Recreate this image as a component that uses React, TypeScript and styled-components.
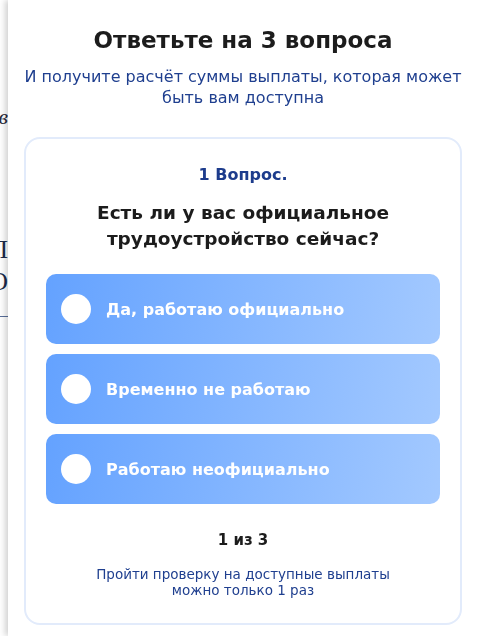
import React from "react";
import styled, { createGlobalStyle } from "styled-components";

const options = ["Да, работаю официально", "Временно не работаю", "Работаю неофициально"];

export default function App() {
    return (
        <>
            <GlobalStyle />
            <Page>
                <PageWord $italic>ов</PageWord>
                <PageHeading>ПП</PageHeading>
                <PageHeading>ОО</PageHeading>
                <PageRule />
            </Page>
            <Drawer>
                <Title>Ответьте на 3 вопроса</Title>
                <Subtitle>
                    И получите расчёт суммы выплаты, которая может
                    <br />
                    быть вам доступна
                </Subtitle>
                <Card>
                    <Step>1 Вопрос.</Step>
                    <Question>
                        Есть ли у вас официальное
                        <br />
                        трудоустройство сейчас?
                    </Question>
                    <Options>
                        {options.map((o) => (
                            <Option key={o}>
                                <Radio />
                                {o}
                            </Option>
                        ))}
                    </Options>
                    <Progress>1 из 3</Progress>
                    <Note>
                        Пройти проверку на доступные выплаты
                        <br />
                        можно только 1 раз
                    </Note>
                </Card>
            </Drawer>
        </>
    );
}

const GlobalStyle = createGlobalStyle`
    html, body {
        margin: 0;
        background: #fff;
        overflow: hidden;
    }
    * {
        box-sizing: border-box;
    }
`;

const Page = styled.div`
    display: flex;
    flex-direction: column;
    align-items: flex-end;
    width: 8px;
    overflow: hidden;
    padding-top: 104px;
    font-family: "Liberation Serif", serif;
`;

const PageWord = styled.div<{ $italic?: boolean }>`
    font-size: 22px;
    font-style: ${(p) => (p.$italic ? "italic" : "normal")};
    color: #2a2a3a;
    height: 130px;
`;

const PageHeading = styled.div`
    font-size: 26px;
    color: #1b2a4a;
    line-height: 32px;
`;

const PageRule = styled.div`
    width: 100%;
    margin-top: 18px;
    border-top: 1px solid #5a6f9a;
`;

const Drawer = styled.div`
    position: fixed;
    top: 0;
    left: 8px;
    right: 0;
    bottom: 0;
    background: #fff;
    box-shadow: -3px 0 6px rgba(0, 0, 0, 0.18);
    padding: 25px 16px 0;
    display: flex;
    flex-direction: column;
    align-items: center;
    font-family: "DejaVu Sans", Inter, sans-serif;
    text-align: center;
`;

const Title = styled.h1`
    margin: 0;
    font-size: 23px;
    line-height: 30px;
    font-weight: 700;
    color: #1c1c1c;
`;

const Subtitle = styled.p`
    margin: 11px 0 0;
    font-size: 16px;
    line-height: 21px;
    color: #1f3f8f;
    white-space: nowrap;
`;

const Card = styled.div`
    margin-top: 29px;
    width: 438px;
    border: 2px solid #e2ebfb;
    border-radius: 16px;
    padding: 26px 20px 25px;
    display: flex;
    flex-direction: column;
    align-items: stretch;
`;

const Step = styled.div`
    font-size: 16px;
    line-height: 20px;
    font-weight: 700;
    color: #1d3c8c;
`;

const Question = styled.div`
    margin-top: 15px;
    font-size: 18.5px;
    line-height: 26px;
    font-weight: 600;
    color: #1c1c1c;
`;

const Options = styled.div`
    margin-top: 22px;
    display: flex;
    flex-direction: column;
    gap: 10px;
`;

const Option = styled.div`
    height: 70px;
    border-radius: 10px;
    background: linear-gradient(100deg, #64a2ff 0%, #a3c9ff 100%);
    display: flex;
    align-items: center;
    gap: 15px;
    padding-left: 15px;
    font-size: 16px;
    font-weight: 700;
    color: #fff;
`;

const Radio = styled.span`
    width: 30px;
    height: 30px;
    border-radius: 50%;
    background: #fff;
    flex: none;
`;

const Progress = styled.div`
    margin-top: 25px;
    font-size: 15px;
    line-height: 22px;
    font-weight: 700;
    color: #1c1c1c;
`;

const Note = styled.div`
    margin-top: 15px;
    font-size: 13.5px;
    line-height: 16px;
    color: #1f3f8f;
`;
